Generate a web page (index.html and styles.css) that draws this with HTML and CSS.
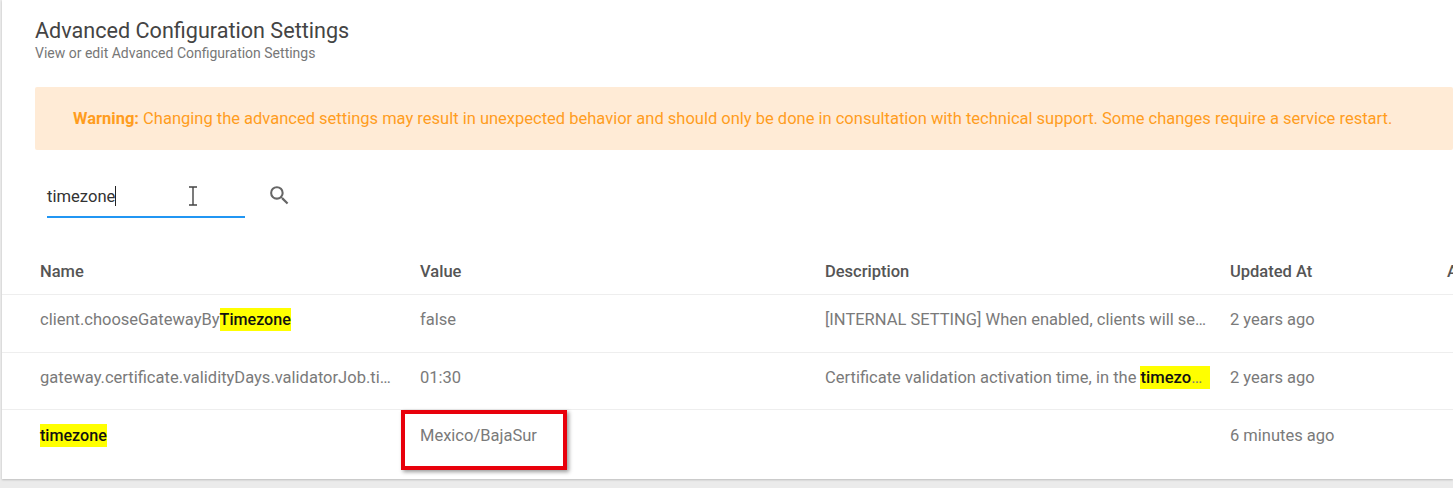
FILE: index.html
```html
<!DOCTYPE html>
<html lang="en">
<head>
    <meta charset="UTF-8">
    <title>Advanced Configuration Settings</title>
    <link rel="stylesheet" href="styles.css">
</head>
<body>
<div class="card">
    <div class="page-head">
        <h1>Advanced Configuration Settings</h1>
        <p>View or edit Advanced Configuration Settings</p>
    </div>

    <div class="warning"><strong>Warning:</strong> Changing the advanced settings may result in unexpected behavior and should only be done in consultation with technical support. Some changes require a service restart.</div>

    <div class="search">
        <div class="search-field">
            <span class="search-text">timezone</span><span class="caret"></span>
            <svg class="ibeam" width="10" height="20" viewBox="0 0 10 20">
                <path d="M1 1h8M5 1v18M1 19h8" fill="none" stroke="#444" stroke-width="1.4"/>
            </svg>
        </div>
        <svg class="search-icon" width="25" height="25" viewBox="0 0 24 24">
            <path fill="#666" d="M15.5 14h-.79l-.28-.27A6.47 6.47 0 0 0 16 9.5 6.5 6.5 0 1 0 9.5 16c1.61 0 3.09-.59 4.23-1.57l.27.28v.79l5 4.99L20.49 19l-4.99-5zm-6 0C7.01 14 5 11.99 5 9.5S7.01 5 9.5 5 14 7.01 14 9.5 11.99 14 9.5 14z"/>
        </svg>
    </div>

    <div class="table-wrap">
        <table class="settings">
            <thead>
                <tr>
                    <th class="col-name">Name</th>
                    <th class="col-value">Value</th>
                    <th class="col-desc">Description</th>
                    <th class="col-updated">Updated At</th>
                    <th class="col-actions">Actions</th>
                </tr>
            </thead>
            <tbody>
                <tr>
                    <td class="col-name">client.chooseGatewayBy<mark>Timezone</mark></td>
                    <td>false</td>
                    <td>[INTERNAL SETTING] When enabled, clients will select a gateway by timezone</td>
                    <td class="col-updated">2 years ago</td>
                    <td></td>
                </tr>
                <tr>
                    <td class="col-name">gateway.certificate.validityDays.validatorJob.timeOfDay</td>
                    <td>01:30</td>
                    <td>Certificate validation activation time, in the <mark class="mark-desc">timezone of the server</mark></td>
                    <td class="col-updated">2 years ago</td>
                    <td></td>
                </tr>
                <tr class="last-row">
                    <td class="col-name"><mark>timezone</mark></td>
                    <td><span class="value-cell">Mexico/BajaSur<span class="callout"></span></span></td>
                    <td></td>
                    <td class="col-updated">6 minutes ago</td>
                    <td></td>
                </tr>
            </tbody>
        </table>
    </div>
</div>
</body>
</html>
```

FILE: styles.css
```css
html, body {
    height: 100%;
    overflow: hidden;
}
body {
    font-family: Roboto, "Liberation Sans", sans-serif;
    margin: 0;
    padding: 0 0 0 2px;
    background-color: #ebebeb;
    box-sizing: border-box;
}
.card {
    height: 479px;
    background-color: white;
    box-sizing: border-box;
    padding-top: 20px;
    box-shadow: 0 1px 2px rgba(0, 0, 0, 0.2);
}
.page-head {
    margin-left: 33px;
}
.page-head h1 {
    margin: 0;
    font-size: 21.6px;
    font-weight: 400;
    line-height: 22px;
    color: #444;
}
.page-head p {
    margin: 3px 0 0;
    font-size: 14px;
    line-height: 16px;
    color: #777;
}
.warning {
    margin: 26px 0 0 33px;
    height: 63px;
    line-height: 63px;
    padding-left: 38px;
    background-color: #ffebd6;
    border-radius: 2px;
    color: #ff9d1e;
    font-size: 16.5px;
    white-space: nowrap;
}
.warning strong {
    font-weight: 700;
}
.search {
    display: flex;
    align-items: center;
    margin: 26px 0 0 45px;
}
.search-field {
    position: relative;
    width: 198px;
    height: 42px;
    box-sizing: border-box;
    border-bottom: 2px solid #2196f3;
    display: flex;
    align-items: center;
    font-size: 16.6px;
    color: #333;
}
.caret {
    width: 1px;
    height: 20px;
    background-color: #222;
}
.ibeam {
    position: absolute;
    left: 141px;
    top: 10px;
}
.search-icon {
    margin-left: 22px;
    margin-top: -3px;
}
.table-wrap {
    overflow: hidden;
    margin-top: 20px;
    height: 241px;
}
.settings {
    table-layout: fixed;
    border-collapse: collapse;
    width: 1600px;
    font-size: 16.5px;
}
.settings th {
    box-sizing: border-box;
    height: 56px;
    padding: 11px 0 0 25px;
    text-align: left;
    font-weight: 500;
    color: #555;
    border-bottom: 1px solid #eeeeee;
}
.settings td {
    box-sizing: border-box;
    height: 58px;
    padding: 0 0 7px 25px;
    color: #7a7a7a;
    border-bottom: 1px solid #eeeeee;
    white-space: nowrap;
    overflow: hidden;
    text-overflow: ellipsis;
}
.settings tbody tr:nth-child(2) td {
    height: 57px;
}
.settings .col-name { width: 393px; padding-left: 38px; padding-right: 2px; }
.settings .col-value { width: 405px; }
.settings .col-desc { width: 410px; }
.settings .col-updated { width: 212px; padding-left: 20px; }
.settings .last-row td {
    border-bottom: none;
    height: 70px;
    vertical-align: top;
    padding-top: 16px;
    overflow: visible;
}
.settings mark {
    background-color: #ffff00;
    color: #111;
    font-weight: 500;
    font-size: 16.1px;
    padding: 2px 0;
}
.settings .mark-desc {
    font-size: 16.6px;
}
.value-cell {
    position: relative;
}
.callout {
    position: absolute;
    left: -19px;
    top: -16px;
    width: 166px;
    height: 60px;
    box-sizing: border-box;
    border: 4px solid #e8000b;
    box-shadow: 2px 2px 4px rgba(0, 0, 0, 0.4);
}
```
